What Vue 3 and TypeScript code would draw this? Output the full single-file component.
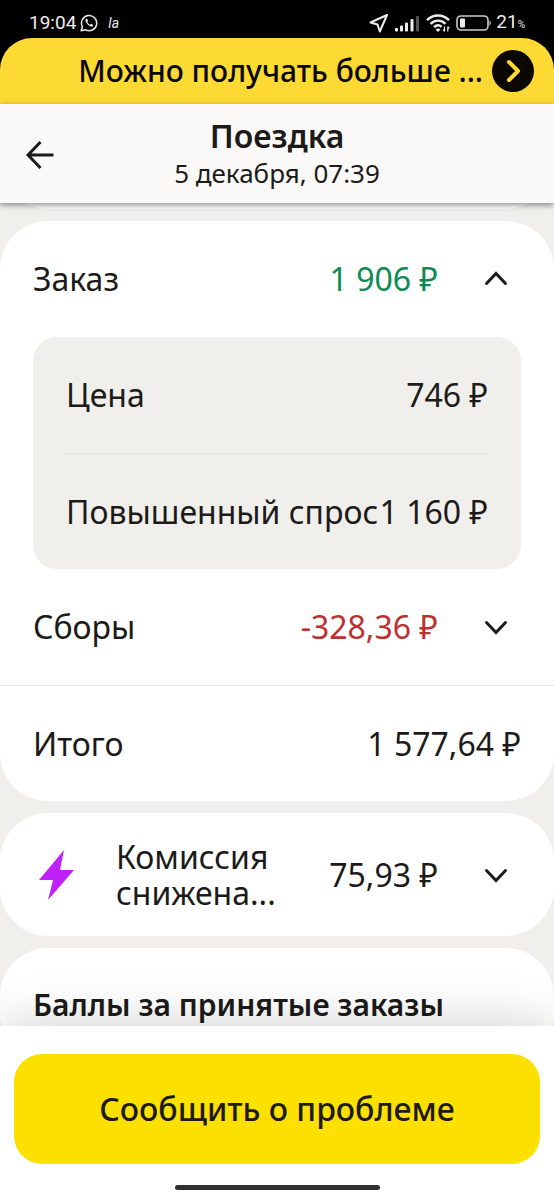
<script setup lang="ts">
import { ref } from 'vue'

interface Line {
  label: string
  value: string
}

const orderOpen = ref(true)
const feesOpen = ref(false)
const commissionOpen = ref(false)

const orderLines: Line[] = [
  { label: 'Цена', value: '746 ₽' },
  { label: 'Повышенный спрос', value: '1 160 ₽' },
]
</script>

<template>
  <div class="screen">
    <div class="status">
      <span class="time">19:04</span>
      <svg class="whatsapp" viewBox="0 0 18 18" width="18" height="18" fill="none" stroke="#e8e8e8" aria-hidden="true">
        <path d="M1.2 16.8 2.4 12.700A7.600 7.600 0 1 1 5.300 15.700Z" stroke-width="1.500" stroke-linejoin="round" />
        <path d="M6.300 4.800c-1.500 1-1 3.200 1.200 5.400s4.600 3.200 5.700 1.500l-.2-1-1.900-.9-1 .9c-1.400-.6-2.300-1.500-2.800-2.700l.8-.9-.8-2Z" fill="#e8e8e8" stroke="none" />
      </svg>
      <i class="app-mark">la</i>
      <div class="status-right">
        <svg viewBox="0 0 20 20" width="20" height="20" fill="none" stroke="#eee" stroke-width="2" stroke-linejoin="round" aria-hidden="true">
          <path d="M18 2 1.500 9.500 8.500 11.500 10.800 18.500Z" />
        </svg>
        <svg class="signal" viewBox="0 0 25 17" width="25" height="17" fill="#eee" aria-hidden="true">
          <rect x="0" y="13" width="3" height="3.500" rx="1" />
          <rect x="5" y="10.500" width="3" height="6" rx="1" />
          <rect x="10" y="7.500" width="3" height="9" rx="1" />
          <rect x="15.500" y="4" width="3" height="12.500" rx="1" />
          <rect x="21" y="1" width="3" height="15.500" rx="1" fill="#555" />
        </svg>
        <svg class="wifi" viewBox="0 0 24 18" width="24" height="18" fill="none" stroke="#eee" stroke-width="2.400" aria-hidden="true">
          <path d="M1 6.200C7.500 0 16.500 0 23 6.200M4.500 9.800c4.400-4.200 10.600-4.200 15 0M8 13.200c2.400-2.200 5.400-2.300 7.600-.4" />
          <path d="m9.500 15.600 2.500 2.400 2.500-2.400c-1.400-1.400-3.600-1.400-5 0Z" fill="#eee" stroke="none" />
          <path d="M18.500 12.500v5M21.800 12.500v5M17 15.500l1.500 2M23.200 14.500l-1.400-2" stroke-width="1.200" />
        </svg>
        <svg class="battery" viewBox="0 0 36 16" width="36" height="16" aria-hidden="true">
          <rect x="1" y="1" width="31" height="14" rx="4" fill="none" stroke="#ccc" stroke-width="1.600" />
          <rect x="4" y="3.500" width="5" height="9" rx="1" fill="#eee" />
          <path d="M33.500 5.500c1.800.8 1.800 4.200 0 5Z" fill="#ccc" />
        </svg>
        <span class="charge">21<small>%</small></span>
      </div>
    </div>

    <div class="banner-back">
      <a class="banner" href="#more">
        <span class="banner-text">Можно получать больше ...</span>
        <svg class="banner-go" viewBox="0 0 42 42" width="42" height="42" aria-hidden="true">
          <circle cx="21" cy="21" r="21" fill="#0a0800" />
          <path d="m17 12 9 9-9 9" fill="none" stroke="#fdda33" stroke-width="4" stroke-linecap="round" stroke-linejoin="round" />
        </svg>
      </a>
    </div>

    <header class="header">
      <button class="back" type="button" aria-label="Назад">
        <svg viewBox="0 0 28 28" width="28" height="28" fill="none" stroke="#1c1b19" stroke-width="3" aria-hidden="true">
          <path d="M27.500 14H2.500M14.500 1 2 14l12.500 13" />
        </svg>
      </button>
      <div class="heading">
        <h1>Поездка</h1>
        <p>5 декабря, 07:39</p>
      </div>
    </header>

    <main class="content">
      <div class="card card-previous"></div>

      <section class="card">
        <button class="row" type="button" :aria-expanded="orderOpen" @click="orderOpen = !orderOpen">
          <span class="label">Заказ</span>
          <span class="income">1 906 ₽</span>
          <svg class="chevron" :class="{ open: orderOpen }" viewBox="0 0 24 24" width="24" height="24" aria-hidden="true">
            <path d="m2.500 7.500 9.500 10 9.500-10" />
          </svg>
        </button>
        <dl v-if="orderOpen" class="panel">
          <div v-for="line in orderLines" :key="line.label" class="panel-row">
            <dt>{{ line.label }}</dt>
            <dd>{{ line.value }}</dd>
          </div>
        </dl>
        <button class="row" type="button" :aria-expanded="feesOpen" @click="feesOpen = !feesOpen">
          <span class="label">Сборы</span>
          <span class="expense">-328,36 ₽</span>
          <svg class="chevron" :class="{ open: feesOpen }" viewBox="0 0 24 24" width="24" height="24" aria-hidden="true">
            <path d="m2.500 7.500 9.500 10 9.500-10" />
          </svg>
        </button>
        <div class="row total">
          <span class="label">Итого</span>
          <span>1 577,64 ₽</span>
        </div>
      </section>

      <section class="card">
        <button class="row commission" type="button" :aria-expanded="commissionOpen" @click="commissionOpen = !commissionOpen">
          <svg class="bolt" viewBox="0 0 48 50" width="48" height="50" fill="#c020fa" aria-hidden="true">
            <path d="M31 0 6 30h14L15 50 41 20H27Z" />
          </svg>
          <span class="label">Комиссия<br />снижена...</span>
          <span>75,93 ₽</span>
          <svg class="chevron" :class="{ open: commissionOpen }" viewBox="0 0 24 24" width="24" height="24" aria-hidden="true">
            <path d="m2.500 7.500 9.500 10 9.500-10" />
          </svg>
        </button>
      </section>

      <section class="card points">
        <h2>Баллы за принятые заказы</h2>
      </section>
    </main>

    <footer class="footer">
      <button class="report" type="button">Сообщить о проблеме</button>
      <div class="home-bar"></div>
    </footer>
  </div>
</template>

<style>
body {
  margin: 0;
}
</style>

<style scoped>
.screen {
  display: flex;
  flex-direction: column;
  height: 100vh;
  overflow: hidden;
  background: #f0efeb;
  color: #1c1b19;
  font: 400 32px/36px 'Noto Sans', 'Open Sans', sans-serif;
}

h1,
h2,
p,
dl,
dd {
  margin: 0;
}

button {
  margin: 0;
  padding: 0;
  border: 0;
  background: none;
  color: inherit;
  font: inherit;
  text-align: left;
  cursor: pointer;
}

svg {
  display: block;
  flex: none;
}

.status {
  display: flex;
  flex: none;
  align-items: center;
  box-sizing: border-box;
  height: 38px;
  padding: 8px 29px 0;
  background: #000;
  color: #eee;
  font: 400 19px/24px Roboto, sans-serif;
}

.whatsapp {
  margin-left: 4px;
}

.app-mark {
  margin-left: 10px;
  font-size: 14px;
}

.status-right {
  display: flex;
  align-items: center;
  margin-left: auto;
}

.signal,
.wifi,
.battery {
  margin-left: 6px;
}

.charge {
  margin-left: 4px;
}

.charge small {
  font-size: 10px;
}

.banner-back {
  flex: none;
  background: #000;
}

.banner {
  display: flex;
  align-items: center;
  justify-content: flex-end;
  gap: 9px;
  height: 66px;
  padding: 0 20px;
  border-radius: 32px 32px 0 0;
  background: #fdda33;
  color: #0a0800;
  font-size: 30px;
  font-weight: 500;
  text-decoration: none;
}

.banner-text {
  white-space: nowrap;
}

.header {
  position: relative;
  z-index: 1;
  display: grid;
  flex: none;
  grid-template-columns: 56px 1fr 56px;
  align-items: center;
  height: 99px;
  background: #faf9f7;
  box-shadow: 0 2px 6px rgb(0 0 0 / 45%);
}

.back {
  padding: 10px 0 8px 26px;
}

.heading {
  text-align: center;
}

h1 {
  font-size: 32px;
  font-weight: 600;
  line-height: 38px;
}

.heading p {
  font-size: 26px;
  line-height: 36px;
}

.content {
  display: flex;
  flex: 1;
  flex-direction: column;
  gap: 12px;
  min-height: 0;
  overflow: hidden;
}

.card {
  flex: none;
  border-radius: 48px;
  background: #fff;
}

.card-previous {
  height: 48px;
  margin-top: -42px;
  border-radius: 0 0 48px 48px;
}

.row {
  display: flex;
  align-items: center;
  box-sizing: border-box;
  width: 100%;
  min-height: 116px;
  padding: 0 33px;
  white-space: nowrap;
}

.label {
  flex: 1;
}

.income {
  color: #0b8a54;
}

.expense {
  color: #bd3030;
}

.chevron {
  margin: 0 13px 0 46px;
  fill: none;
  stroke: #1c1b19;
  stroke-width: 3;
  stroke-linecap: round;
}

.chevron.open {
  transform: rotate(180deg);
}

.panel {
  margin: 0 33px;
  padding: 0 33px;
  border-radius: 24px;
  background: #f0efeb;
}

.panel-row {
  display: flex;
  align-items: center;
  justify-content: space-between;
  box-sizing: border-box;
  height: 116px;
  white-space: nowrap;
}

.panel-row + .panel-row {
  border-top: 1px solid #e2e1dd;
}

.total {
  border-top: 1px solid #e4e4e4;
}

.commission {
  min-height: 123px;
}

.bolt {
  margin-right: 35px;
}

.points {
  padding: 39px 33px;
}

h2 {
  font-size: 30px;
  font-weight: 600;
  line-height: 36px;
}

.footer {
  position: relative;
  display: flex;
  flex: none;
  flex-direction: column;
  gap: 21px;
  padding: 28px 14px 10px;
  background: #fff;
  box-shadow: 0 0 50px rgb(0 0 0 / 20%);
}

.report {
  height: 110px;
  border-radius: 28px;
  background: #fce000;
  font-weight: 500;
  text-align: center;
}

.home-bar {
  align-self: center;
  width: 205px;
  height: 5px;
  border-radius: 3px;
  background: #303030;
}
</style>
